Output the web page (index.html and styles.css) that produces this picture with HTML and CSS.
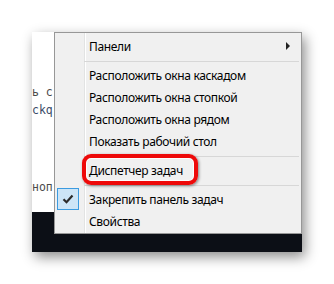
FILE: index.html
```html
<!DOCTYPE html>
<html lang="ru">
<head>
    <meta charset="UTF-8">
    <meta name="viewport" content="width=device-width, initial-scale=1.0">
    <title>Меню панели задач</title>
    <link rel="stylesheet" href="styles.css">
</head>
<body>
    <div class="shot">
        <div class="row">
            <div class="side">
                <div class="page">
                    <p class="code">ь с</p>
                    <p class="code blue">ckq</p>
                    <p class="code low">ноп</p>
                </div>
            </div>
            <div class="menu">
                <div class="item">
                    <span class="ico"></span>Панели<span class="arrow"></span>
                </div>
                <div class="sep"></div>
                <div class="item"><span class="ico"></span>Расположить окна каскадом</div>
                <div class="item"><span class="ico"></span>Расположить окна стопкой</div>
                <div class="item"><span class="ico"></span>Расположить окна рядом</div>
                <div class="item"><span class="ico"></span>Показать рабочий стол</div>
                <div class="sep"></div>
                <div class="item marked">
                    <span class="ico"></span>Диспетчер задач
                    <span class="mark"></span>
                </div>
                <div class="sep"></div>
                <div class="item">
                    <span class="ico checked">
                        <svg width="12" height="10" viewBox="0 0 12 10">
                            <path d="M1.5 5.2 L4.5 8.2 L10.5 1.5" fill="none" stroke="#2b2b2b" stroke-width="2.2"/>
                        </svg>
                    </span>Закрепить панель задач
                </div>
                <div class="item"><span class="ico"></span>Свойства</div>
            </div>
        </div>
    </div>
</body>
</html>
```

FILE: styles.css
```css
html, body {
    margin: 0;
    background: #fff;
}
body {
    width: 334px;
    height: 284px;
    overflow: hidden;
}
.shot {
    margin: 32px 0 0 32px;
    width: 270px;
    height: 220px;
    background: #0c0f16;
    box-shadow: 3px 5px 12px rgba(0, 0, 0, 0.45);
}
.row {
    display: flex;
    align-items: flex-start;
}
.side {
    width: 22px;
    flex: none;
    overflow: hidden;
}
.page {
    height: 180px;
    background: #fff;
    padding-top: 51px;
    box-sizing: border-box;
}
.code {
    margin: 0;
    font-family: "DejaVu Sans Mono", monospace;
    font-size: 11.5px;
    line-height: 18px;
    white-space: nowrap;
    color: #4a4a4a;
}
.code.blue {
    color: #3a4a66;
}
.code.low {
    margin-top: 59px;
}
.menu {
    width: 248px;
    flex: none;
    box-sizing: border-box;
    border: 1px solid #979797;
    padding: 2px 1px 1px 0;
    background: linear-gradient(to right, #f0f0f0 0 29px, #e2e3e3 29px 30px, #fff 30px 31px, #f0f0f0 31px);
    font-family: "Noto Sans", sans-serif;
    font-size: 12px;
    letter-spacing: -0.35px;
    color: #000;
}
.item {
    display: flex;
    align-items: center;
    height: 22px;
    white-space: nowrap;
}
.ico {
    width: 22px;
    height: 22px;
    margin: 0 10px 0 2px;
    flex: none;
    box-sizing: border-box;
    display: flex;
    align-items: center;
    justify-content: center;
}
.ico.checked {
    border: 1px solid #3c9be0;
    background: #cde5f7;
}
.arrow {
    margin-left: auto;
    margin-right: 10px;
    width: 0;
    height: 0;
    border-left: 4px solid #222;
    border-top: 4px solid transparent;
    border-bottom: 4px solid transparent;
}
.sep {
    height: 1px;
    margin: 4px 1px 2px 29px;
    background: #d7d7d7;
}
.marked {
    position: relative;
}
.mark {
    position: absolute;
    left: 27px;
    top: -5px;
    width: 116px;
    height: 31px;
    box-sizing: border-box;
    border: 4px solid #ee0a0a;
    border-radius: 9px;
    box-shadow: 1px 1px 3px rgba(0, 0, 0, 0.45), inset 0 0 1px 1px #fff;
}
```
